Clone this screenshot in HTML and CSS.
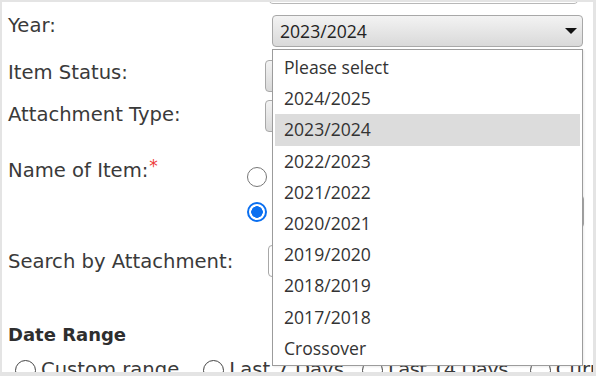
FILE: index.html
```html
<!DOCTYPE html>
<html>
<head>
<meta charset="utf-8">
<link rel="stylesheet" href="styles.css">
</head>
<body>
<div class="frame">
  <div class="content">
    <div class="stub"></div>

    <div class="row row-year">
      <div class="label lbl-year">Year:</div>
      <div class="select sel-year"><span>2023/2024</span><i class="arrow"></i></div>
    </div>

    <div class="row row-status">
      <div class="label lbl-status">Item Status:</div>
      <div class="select sel-wide"></div>
    </div>

    <div class="row row-attach">
      <div class="label lbl-attach">Attachment Type:</div>
      <div class="select sel-wide"></div>
    </div>

    <div class="row row-name">
      <div class="label lbl-name">Name of Item:<span class="req">*</span></div>
      <div class="radio-col">
        <div class="opt"><span class="radio"></span><div class="textbox tb-1"></div></div>
        <div class="opt"><span class="radio checked"></span><div class="textbox tb-2"></div></div>
      </div>
    </div>

    <div class="row row-search">
      <div class="label lbl-search">Search by Attachment:</div>
      <div class="textbox tb-search"></div>
    </div>

    <div class="heading">Date Range</div>

    <div class="ranges">
      <span class="rr"><span class="circ"></span>Custom range</span>
      <span class="rr r2"><span class="circ"></span>Last 7 Days</span>
      <span class="rr r3"><span class="circ"></span>Last 14 Days</span>
      <span class="rr r4"><span class="circ"></span>Current Month</span>
    </div>
  </div>

  <ul class="dropdown">
    <li>Please select</li>
    <li>2024/2025</li>
    <li class="hl">2023/2024</li>
    <li>2022/2023</li>
    <li>2021/2022</li>
    <li>2020/2021</li>
    <li>2019/2020</li>
    <li>2018/2019</li>
    <li>2017/2018</li>
    <li>Crossover</li>
  </ul>
</div>
</body>
</html>
```

FILE: styles.css
```css
html, body {
  margin: 0;
  padding: 0;
  background: #fff;
}

.frame {
  width: 596px;
  height: 376px;
  box-sizing: border-box;
  border: 2px solid #e4e4e4;
  border-right-width: 3px;
  border-bottom-width: 4px;
  overflow: hidden;
  position: relative;
  background: #fff;
  font-family: "DejaVu Sans", Verdana, sans-serif;
  font-size: 19.6px;
  color: #3a3a3a;
}

.content {
  padding-left: 6px;
}

.stub {
  margin-left: 260px;
  margin-top: -31px;
  width: 311px;
  height: 33px;
  box-sizing: border-box;
  border: 1px solid #b8b8b8;
  border-radius: 5px;
  background: #fff;
}

.row {
  display: flex;
  align-items: flex-start;
}

.label {
  flex: none;
  width: 260px;
  line-height: 24px;
  white-space: nowrap;
}

.select {
  box-sizing: border-box;
  height: 32px;
  border: 1px solid #a8a8a8;
  border-radius: 4px;
  background: linear-gradient(#f3f3f3, #d9d9d9);
  display: flex;
  align-items: center;
  font-family: "Open Sans", "Noto Sans", sans-serif;
  font-size: 17.6px;
  color: #222;
}

.row-year {
  margin-top: 11px;
}
.lbl-year {
  margin-top: -1px;
}
.sel-year {
  margin-left: 4px;
  width: 311px;
  padding-left: 7px;
  padding-right: 5px;
  justify-content: space-between;
}
.arrow {
  width: 0;
  height: 0;
  border-left: 6px solid transparent;
  border-right: 6px solid transparent;
  border-top: 6px solid #111;
}

.row-status {
  margin-top: 13px;
}
.lbl-status {
  padding-top: 1px;
}
.sel-wide {
  margin-left: -3px;
  width: 316px;
}

.row-attach {
  margin-top: 8px;
}
.lbl-attach {
  padding-top: 3px;
}

.row-name {
  margin-top: 18px;
}
.lbl-name {
  width: 239px;
  padding-top: 4px;
}
.req {
  color: #ee3b3b;
  font-size: 17px;
  vertical-align: 5px;
  margin-left: 1px;
}
.radio-col {
  display: flex;
  flex-direction: column;
  gap: 2px;
  padding-top: 10px;
}
.opt {
  display: flex;
  align-items: center;
  gap: 5px;
  height: 33px;
}
.radio {
  width: 20px;
  height: 20px;
  box-sizing: border-box;
  border: 1.5px solid #777;
  border-radius: 50%;
  background: #fff;
  flex: none;
}
.radio.checked {
  border: 2px solid #0a6ff0;
  background: radial-gradient(circle, #0a6ff0 0 5.5px, #fff 6px);
}
.textbox {
  box-sizing: border-box;
  height: 33px;
  border: 1px solid #a8a8a8;
  border-radius: 4px;
  background: #fff;
}
.tb-1 {
  width: 309px;
}
.tb-2 {
  width: 312px;
}

.row-search {
  margin-top: 17px;
}
.lbl-search {
  padding-top: 5px;
}
.tb-search {
  width: 312px;
  height: 32px;
}

.heading {
  margin-top: 47px;
  font-weight: bold;
  font-size: 18px;
  line-height: 22px;
  color: #2e2e2e;
}

.ranges {
  margin-top: 12px;
  margin-left: 7px;
  display: flex;
  white-space: nowrap;
  line-height: 24px;
}
.rr {
  display: inline-flex;
  align-items: center;
  gap: 5px;
}
.r2 {
  margin-left: 24px;
}
.r3 {
  margin-left: 18px;
  letter-spacing: -0.6px;
}
.r4 {
  margin-left: 22px;
}
.circ {
  width: 21px;
  height: 21px;
  box-sizing: border-box;
  border: 1px solid #444;
  border-radius: 50%;
  flex: none;
}

.dropdown {
  position: absolute;
  left: 270px;
  top: 47px;
  width: 311px;
  box-sizing: border-box;
  margin: 0;
  padding: 2px 2px 1px;
  list-style: none;
  border: 1px solid #9c9c9c;
  background: #fff;
  box-shadow: 1px 1px 2px rgba(0, 0, 0, 0.08);
  font-family: "Open Sans", "Noto Sans", sans-serif;
  font-size: 17.6px;
  color: #333;
}
.dropdown li {
  height: 31.2px;
  line-height: 31.2px;
  padding-left: 9px;
}
.dropdown li.hl {
  background: #dcdcdc;
}
```
